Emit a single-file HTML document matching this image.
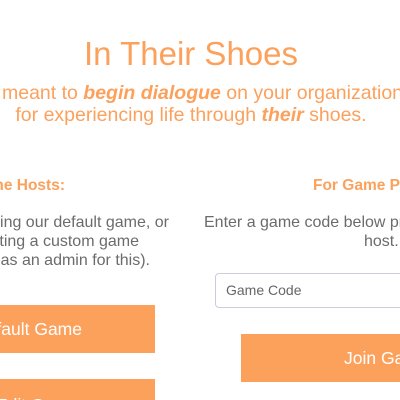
<!DOCTYPE html>
<html style="overflow:hidden"><head><style>
body{margin:0;width:400px;height:400px;overflow:hidden;background:#fff;font-family:"Liberation Sans",sans-serif;position:relative}
div{position:absolute;white-space:nowrap}
.o{color:#fca15c}
.g{color:#6b6b6b;font-size:16px}
.btn{background:#fca15c;height:48px}
.bt{color:#fff;font-size:17.5px}
</style></head><body>
<div class="o" style="left:0;width:382px;text-align:center;top:35px;font-size:33px">In Their Shoes</div>
<div class="o" style="left:2px;top:82px;font-size:19.5px">meant to <b><i>begin dialogue</i></b> on your organization's</div>
<div class="o" style="left:-200px;width:782px;text-align:center;top:104px;font-size:19.5px">for experiencing life through <b><i>their</i></b> shoes.</div>
<div class="o" style="right:335px;top:177px;font-size:15.5px;font-weight:bold">For Game Hosts:</div>
<div class="o" style="left:313px;top:177px;font-size:15.5px;font-weight:bold">For Game Players:</div>
<div class="g" style="right:231px;top:214px">Start by using our default game, or</div>
<div class="g" style="right:261px;top:233px">by creating a custom game</div>
<div class="g" style="right:250px;top:252px">(register as an admin for this).</div>
<div class="g" style="left:204px;top:214px">Enter a game code below provided by the</div>
<div class="g" style="left:364px;top:233px">host.</div>
<div style="left:215px;top:273px;width:200px;height:33px;border:1px solid #ccd;border-radius:4px;color:#666;font-size:14px;line-height:33px;padding-left:10px">Game Code</div>
<div class="btn" style="left:0;width:155px;top:305px"></div>
<div class="bt" style="right:318px;top:319px">Play Default Game</div>
<div class="btn" style="left:0;width:155px;top:379px"></div>
<div class="bt" style="left:-4px;top:395px">Edit Game</div>
<div class="btn" style="left:241px;width:159px;top:334px"></div>
<div class="bt" style="left:344px;top:348px">Join Game</div>
</body></html>
